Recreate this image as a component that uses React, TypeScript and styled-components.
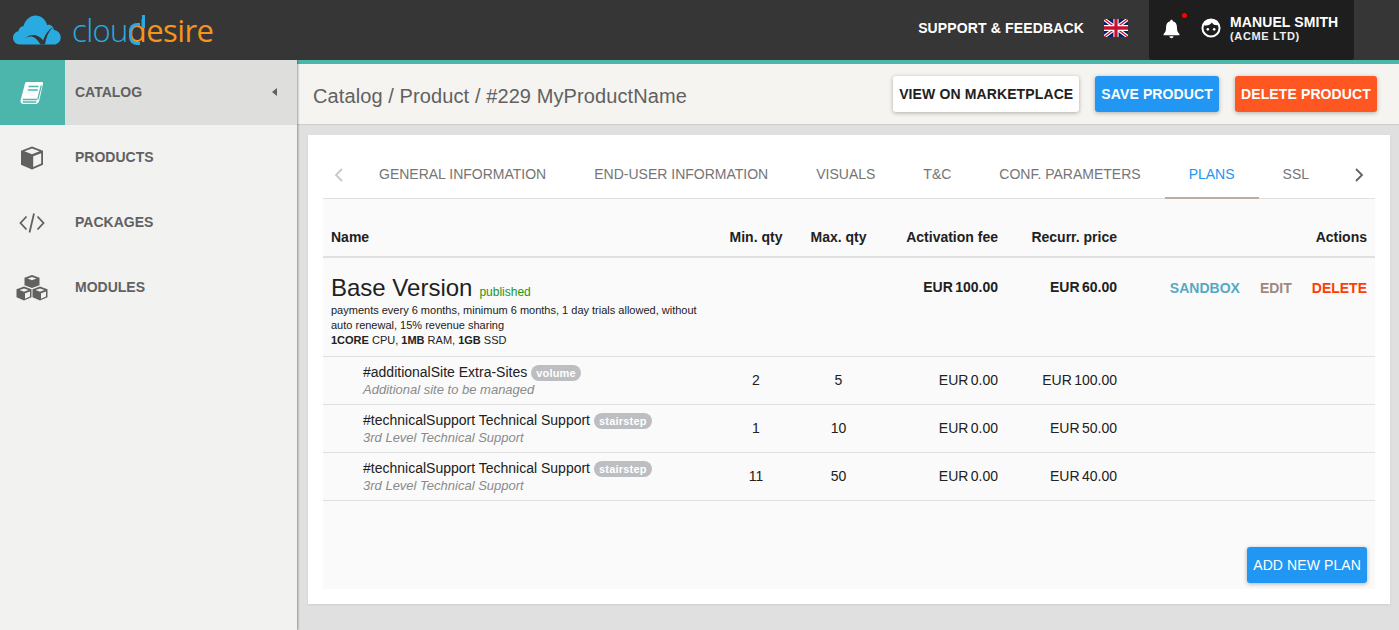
import React from "react";
import styled, { createGlobalStyle } from "styled-components";

const Global = createGlobalStyle`
  html, body { margin: 0; padding: 0; height: 100%; background: #e0e0e0; overflow: hidden; }
  #root { height: 630px; }
  * { box-sizing: border-box; }
`;
const Page = styled.div`
  width: 1399px; height: 630px; display: flex; flex-direction: column;
  font-family: "Liberation Sans", Arial, sans-serif; background: #e0e0e0;
`;
const Header = styled.header`
  height: 60px; flex: none; background: #363636; display: flex; align-items: center; color: #fff; position: relative; z-index: 3;
`;
const Logo = styled.div`
  display: flex; align-items: center; padding-left: 13px; gap: 11px;
`;
const LogoText = styled.span`
  font-family: "Open Sans", Lato, sans-serif; font-weight: 300; font-size: 31px; letter-spacing: -0.6px; line-height: 60px; color: #29abe2;
`;
const LogoAccent = styled.span`
  color: #f7941d; font-weight: 400;
`;
const LogoD = styled.span`
  position: relative; color: #f7941d; font-weight: 400;
  &::before {
    content: ""; position: absolute; left: 1px; top: 14px; width: 8px; height: 16px;
    border: 3px solid #29abe2; border-right: 0; border-radius: 8px 0 0 8px;
  }
  &::after {
    content: ""; position: absolute; left: 14px; top: 6px; width: 3px; height: 13px; background: #29abe2;
  }
`;
const HeaderRight = styled.div`
  margin-left: auto; display: flex; align-items: center; height: 60px; padding-right: 45px;
`;
const Support = styled.span`
  font-size: 14px; font-weight: 700; letter-spacing: 0.14px; margin-right: 20px; padding-bottom: 4px;
`;
const FlagSvg = styled.svg`
  width: 24px; height: 18px; margin-bottom: 4px;
`;
const UserBox = styled.div`
  margin-left: 21px; width: 205px; height: 60px; background: #1e1e1e; border-radius: 0 0 3px 3px; display: flex; align-items: center; padding-left: 12px;
`;
const BellWrap = styled.div`
  position: relative; width: 20px; height: 20px; margin-right: 20px; margin-bottom: 2px; display: flex; justify-content: center;
`;
const Dot = styled.span`
  position: absolute; top: -6px; right: -6px; width: 5px; height: 5px; border-radius: 50%; background: #f00;
`;
const FaceSvg = styled.svg`
  width: 20px; height: 20px; margin-bottom: 4px; flex: none;
`;
const UserText = styled.div`
  margin-left: 9px; margin-bottom: 4px; display: flex; flex-direction: column;
`;
const UserName = styled.span`
  font-size: 14px; font-weight: 700; line-height: 16px; letter-spacing: 0.1px;
`;
const UserOrg = styled.span`
  font-size: 11px; font-weight: 700; line-height: 13px; letter-spacing: 0.65px; color: #eee;
`;
const Body = styled.div`
  flex: 1; display: flex; min-height: 0;
`;
const Sidebar = styled.nav`
  width: 297px; flex: none; background: #f2f2f1; box-shadow: 1px 0 2px rgba(0,0,0,.35); position: relative; z-index: 2;
`;
const NavItem = styled.div<{ $active?: boolean }>`
  height: 65px; display: flex; align-items: center; background: ${p => (p.$active ? "#dededc" : "transparent")};
`;
const NavIcon = styled.div<{ $active?: boolean }>`
  width: 65px; height: 65px; display: flex; align-items: center; justify-content: center; padding-right: 1px;
  background: ${p => (p.$active ? "#4db6ac" : "transparent")}; color: ${p => (p.$active ? "#fff" : "#616161")};
`;
const NavLabel = styled.span`
  margin-left: 10px; font-size: 14px; font-weight: 700; color: #616161; padding-bottom: 1px; flex: 1;
`;
const Caret = styled.span`
  width: 0; height: 0; border-style: solid; border-width: 4px 5px 4px 0; border-color: transparent #616161 transparent transparent; margin-right: 20px; margin-bottom: 2px;
`;
const Main = styled.main`
  flex: 1; min-width: 0; display: flex; flex-direction: column;
`;
const TitleBar = styled.div`
  height: 64px; flex: none; background: #f5f4f0; border-top: 4px solid #4db6ac; display: flex; align-items: center; padding: 0 22px 0 16px; box-shadow: 0 1px 1px rgba(0,0,0,.08);
`;
const Title = styled.h1`
  margin: 0 auto 0 0; font-size: 20px; font-weight: 400; color: #616161; padding-top: 4px; letter-spacing: 0.1px;
`;
const ActionButton = styled.button<{ $bg: string; $fg: string }>`
  height: 36px; border: 0; border-radius: 3px; padding: 0 6px; margin-left: 16px; background: ${p => p.$bg}; color: ${p => p.$fg};
  font-family: inherit; font-size: 14px; font-weight: 700; letter-spacing: 0.12px; box-shadow: 0 1px 4px rgba(0,0,0,.3);
`;
const Card = styled.section`
  margin: 11px 9px 0 11px; height: 469px; background: #fff; padding: 15px 15px; box-shadow: 0 1px 2px rgba(0,0,0,.08);
`;
const Tabs = styled.div`
  height: 49px; display: flex; align-items: stretch; border-bottom: 1px solid #e0e0e0;
`;
const Arrow = styled.div<{ $off?: boolean }>`
  width: 32px; flex: none; display: flex; align-items: center; justify-content: center; color: ${p => (p.$off ? "#c8c8c8" : "#616161")}; padding-top: 1px;
`;
const Tab = styled.div<{ $active?: boolean }>`
  padding: 0 24px; display: flex; align-items: center; font-size: 14px; white-space: nowrap;
  color: ${p => (p.$active ? "#2196f3" : "#757575")};
  margin-bottom: -1px;
  border-bottom: 2px solid ${p => (p.$active ? "#bcaaa4" : "transparent")};
`;
const TabRow = styled.div`
  flex: 1; display: flex;
`;
const Panel = styled.div`
  height: 390px; background: #fafafa; display: flex; flex-direction: column; position: relative;
`;
const cols = "392px 82px 83px 126px 119px 250px";
const HeadRow = styled.div`
  display: grid; grid-template-columns: ${cols}; height: 59px; border-bottom: 2px solid #e0e0e0; align-items: center; padding-top: 18px;
`;
const BaseRow = styled.div`
  display: grid; grid-template-columns: ${cols}; height: 99px; border-bottom: 1px solid #e0e0e0;
`;
const SubRow = styled.div`
  display: grid; grid-template-columns: ${cols}; height: 48px; padding-bottom: 2px; border-bottom: 1px solid #e0e0e0; align-items: center;
`;
const Cell = styled.div<{ $align?: string; $bold?: boolean }>`
  padding: 0 8px; text-align: ${p => p.$align || "left"}; font-weight: ${p => (p.$bold ? 700 : 400)}; font-size: 14px; color: #212121;
`;
const PriceCell = styled(Cell)`
  word-spacing: -1.5px;
`;
const TopPriceCell = styled(PriceCell)`
  padding-top: 21px;
`;
const NameCell = styled.div`
  padding: 15px 8px 0; color: #212121;
`;
const PlanTitle = styled.div`
  display: flex; align-items: baseline; gap: 7px; height: 30px;
`;
const PlanName = styled.span`
  font-size: 24px; line-height: 30px;
`;
const Published = styled.span`
  font-size: 12px; color: #1a961a;
`;
const PlanDesc = styled.div`
  font-size: 11px; line-height: 15px; width: 380px;
`;
const ActionsCell = styled.div`
  display: flex; justify-content: flex-end; gap: 20px; padding: 22px 8px 0; font-size: 14px; font-weight: 700;
`;
const ActionLink = styled.span<{ $c: string }>`
  color: ${p => p.$c};
`;
const ExtraCell = styled.div`
  padding-left: 40px; color: #212121;
`;
const ExtraTitle = styled.div`
  font-size: 14px; line-height: 18px; display: flex; align-items: center; gap: 4px;
`;
const Badge = styled.span`
  background: #bcbec2; color: #fff; border-radius: 8px; font-size: 11px; font-weight: 700; line-height: 16px; padding: 0 5px; letter-spacing: 0.2px; margin-top: 2px;
`;
const ExtraDesc = styled.div`
  font-size: 13px; line-height: 15px; font-style: italic; color: #8a8a8a; margin-top: 1px;
`;
const AddButton = styled(ActionButton)`
  position: absolute; right: 8px; bottom: 6px; margin: 0; font-weight: 400; letter-spacing: 0.1px;
`;

const Cloud = () => (
  <svg width="48" height="30" viewBox="0 0 48 30">
    <path fill="#29abe2" d="M7 29.5C2.8 29.5 0 26.5 0 22.8c0-3.3 2.3-6 5.4-6.5C6 13 8 11.3 10.3 11.3 12.500 4.700 17 .5 22.500.5c5.600 0 10.300 4 11.700 9.700 1-.4 2-.6 3-.2 2.500.9 3.500 3 3.600 5.100 4 .5 6.900 3.500 6.900 7.300 0 3.800-3 7.100-7 7.100H7z" />
    <path fill="#363636" d="M12 23.500c5-3.500 10-3 15.500 6h4.500c1-7 3.500-13 8-17.500-5 3-8 8-9.800 13.500C25.500 19.500 18 18 12 23.500z" />
  </svg>
);
const BookIcon = () => (
  <svg width="24" height="24" viewBox="0 0 24 24" fill="none">
    <path fill="#fff" d="M6.500 1h15.300c1 0 1.500.8 1.200 1.800l-3.800 17c-.4 1.800-1.800 3.200-3.700 3.200H3.500C1.300 23 0 21.300.6 19.300L5 2.500C5.200 1.600 5.700 1 6.500 1z" />
    <path stroke="#4db6ac" strokeWidth="1.500" d="M2.800 18.400h14.200M2.800 21h13.500M8.500 5.500h10M7.800 9h10" />
    <path stroke="#4db6ac" strokeWidth="1.200" d="M17.800 18.500l3.500-14" />
  </svg>
);
const CubeIcon = () => (
  <svg width="24" height="24" viewBox="0 0 24 24">
    <path fill="#616161" d="M12 .500l11 4.200v14l-11 4.800-11-4.800v-14L12 .500z" />
    <path fill="#f2f2f1" d="M12 2.600L19.600 5.300 12 8.200 4.400 5.300 12 2.600zM13.200 10.200l8-3v10.200l-8 3.500V10.200z" />
  </svg>
);
const CodeIcon = () => (
  <svg width="26" height="20" viewBox="0 0 26 20" fill="none" stroke="#616161" strokeWidth="1.800">
    <path d="M7.500 3.500L1.500 10l6 6.500M18.500 3.500l6 6.500-6 6.500M15 .5L10.500 19.500" />
  </svg>
);
const CubesIcon = () => (
  <svg width="32" height="26" viewBox="0 0 32 26">
    <g fill="#616161">
      <path d="M16 0l7.500 2.800v7.400L16 13l-7.500-2.800V2.800L16 0z" />
      <path d="M8 11.500l7.500 2.800v8L8 25.500.5 22.300v-8L8 11.500z" />
      <path d="M24 11.500l7.500 2.800v8l-7.500 3.200-7.500-3.200v-8L24 11.500z" />
    </g>
    <path fill="#f2f2f1" d="M16 2l4.500 1.600L16 5.300l-4.500-1.700L16 2zM8 13.500l4.500 1.600L8 16.800l-4.500-1.700L8 13.500zM24 13.500l4.500 1.600-4.500 1.700-4.500-1.700 4.500-1.600zM25 18.300l5-1.800v5l-5 2.200v-5.400zM9 18.300l5-1.800v5l-5 2.200v-5.400z" />
  </svg>
);
const Flag = () => (
  <FlagSvg viewBox="0 0 60 40" preserveAspectRatio="none">
    <rect width="60" height="40" fill="#012169" />
    <path d="M0 0l60 40M60 0L0 40" stroke="#fff" strokeWidth="8" />
    <path d="M0 0l60 40M60 0L0 40" stroke="#c8102e" strokeWidth="3" />
    <path d="M30 0v40M0 20h60" stroke="#fff" strokeWidth="13" />
    <path d="M30 0v40M0 20h60" stroke="#c8102e" strokeWidth="8" />
  </FlagSvg>
);
const Bell = () => (
  <svg width="17" height="20" viewBox="0 0 20 24">
    <path fill="#fff" d="M10 1c1 0 1.600.7 1.600 1.700 3.300.8 4.900 3.500 4.900 6.800 0 4.500 1 6.700 3 8.500v1.500H.5V18c2-1.800 3-4 3-8.500 0-3.300 1.600-6 4.900-6.800C8.400 1.700 9 1 10 1z" />
    <path fill="#fff" d="M7.500 20.800h5c0 1.300-1.100 2.200-2.500 2.200s-2.500-.9-2.500-2.200z" />
  </svg>
);
const Face = () => (
  <FaceSvg viewBox="0 0 22 22">
    <circle cx="11" cy="11" r="9.400" fill="none" stroke="#fff" strokeWidth="2.200" />
    <path fill="#fff" d="M3 8c4 .8 7-.2 9-3 1.500 2.500 3.500 3.300 7 3l-1-5-7-2-6 2z" />
    <circle cx="7.500" cy="12.500" r="1.400" fill="#fff" />
    <circle cx="14.500" cy="12.500" r="1.400" fill="#fff" />
  </FaceSvg>
);
const Chevron = ({ left }: { left?: boolean }) => (
  <svg width="10" height="14" viewBox="0 0 10 14" fill="none" stroke="currentColor" strokeWidth="1.800">
    <path d={left ? "M8 1L2 7l6 6" : "M2 1l6 6-6 6"} />
  </svg>
);

const tabs = ["GENERAL INFORMATION", "END-USER INFORMATION", "VISUALS", "T&C", "CONF. PARAMETERS", "PLANS", "SSL"];
const nav = [
  { label: "PRODUCTS", icon: <CubeIcon /> },
  { label: "PACKAGES", icon: <CodeIcon /> },
  { label: "MODULES", icon: <CubesIcon /> },
];
const extras = [
  { name: "#additionalSite Extra-Sites", badge: "volume", desc: "Additional site to be managed", min: 2, max: 5, price: "EUR 100.00" },
  { name: "#technicalSupport Technical Support", badge: "stairstep", desc: "3rd Level Technical Support", min: 1, max: 10, price: "EUR 50.00" },
  { name: "#technicalSupport Technical Support", badge: "stairstep", desc: "3rd Level Technical Support", min: 11, max: 50, price: "EUR 40.00" },
];

export default function App() {
  return (
    <Page>
      <Global />
      <Header>
        <Logo>
          <Cloud />
          <LogoText>clou<LogoD>d</LogoD><LogoAccent>esire</LogoAccent></LogoText>
        </Logo>
        <HeaderRight>
          <Support>SUPPORT &amp; FEEDBACK</Support>
          <Flag />
          <UserBox>
            <BellWrap><Bell /><Dot /></BellWrap>
            <Face />
            <UserText>
              <UserName>MANUEL SMITH</UserName>
              <UserOrg>(ACME LTD)</UserOrg>
            </UserText>
          </UserBox>
        </HeaderRight>
      </Header>
      <Body>
        <Sidebar>
          <NavItem $active>
            <NavIcon $active><BookIcon /></NavIcon>
            <NavLabel>CATALOG</NavLabel>
            <Caret />
          </NavItem>
          {nav.map(n => (
            <NavItem key={n.label}>
              <NavIcon>{n.icon}</NavIcon>
              <NavLabel>{n.label}</NavLabel>
            </NavItem>
          ))}
        </Sidebar>
        <Main>
          <TitleBar>
            <Title>Catalog / Product / #229 MyProductName</Title>
            <ActionButton $bg="#fff" $fg="#212121">VIEW ON MARKETPLACE</ActionButton>
            <ActionButton $bg="#2196f3" $fg="#fff">SAVE PRODUCT</ActionButton>
            <ActionButton $bg="#ff5722" $fg="#fff">DELETE PRODUCT</ActionButton>
          </TitleBar>
          <Card>
            <Tabs>
              <Arrow $off><Chevron left /></Arrow>
              <TabRow>
                {tabs.map(t => <Tab key={t} $active={t === "PLANS"}>{t}</Tab>)}
              </TabRow>
              <Arrow><Chevron /></Arrow>
            </Tabs>
            <Panel>
              <HeadRow>
                <Cell $bold>Name</Cell>
                <Cell $bold $align="center">Min. qty</Cell>
                <Cell $bold $align="center">Max. qty</Cell>
                <Cell $bold $align="right">Activation fee</Cell>
                <Cell $bold $align="right">Recurr. price</Cell>
                <Cell $bold $align="right">Actions</Cell>
              </HeadRow>
              <BaseRow>
                <NameCell>
                  <PlanTitle>
                    <PlanName>Base Version</PlanName>
                    <Published>published</Published>
                  </PlanTitle>
                  <PlanDesc>
                    payments every 6 months, minimum 6 months, 1 day trials allowed, without auto renewal, 15% revenue sharing<br />
                    <b>1CORE</b> CPU, <b>1MB</b> RAM, <b>1GB</b> SSD
                  </PlanDesc>
                </NameCell>
                <Cell />
                <Cell />
                <TopPriceCell $align="right" $bold>EUR 100.00</TopPriceCell>
                <TopPriceCell $align="right" $bold>EUR 60.00</TopPriceCell>
                <ActionsCell>
                  <ActionLink $c="#56a9c4">SANDBOX</ActionLink>
                  <ActionLink $c="#a1887f">EDIT</ActionLink>
                  <ActionLink $c="#ff3d00">DELETE</ActionLink>
                </ActionsCell>
              </BaseRow>
              {extras.map((e, i) => (
                <SubRow key={i}>
                  <ExtraCell>
                    <ExtraTitle>{e.name} <Badge>{e.badge}</Badge></ExtraTitle>
                    <ExtraDesc>{e.desc}</ExtraDesc>
                  </ExtraCell>
                  <Cell $align="center">{e.min}</Cell>
                  <Cell $align="center">{e.max}</Cell>
                  <PriceCell $align="right">EUR 0.00</PriceCell>
                  <PriceCell $align="right">{e.price}</PriceCell>
                  <Cell />
                </SubRow>
              ))}
              <AddButton $bg="#2196f3" $fg="#fff">ADD NEW PLAN</AddButton>
            </Panel>
          </Card>
        </Main>
      </Body>
    </Page>
  );
}
